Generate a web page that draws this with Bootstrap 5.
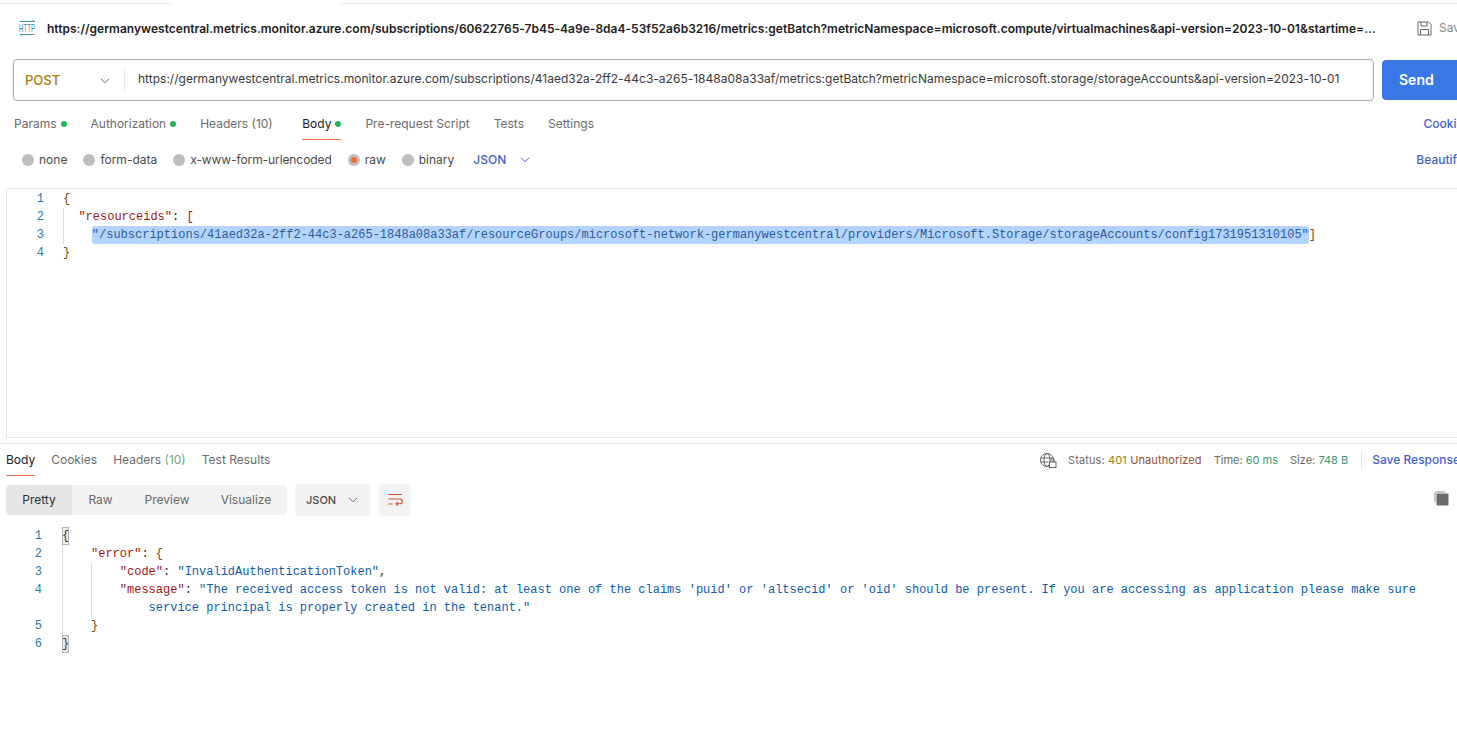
<!DOCTYPE html>
<html lang="en">
<head>
<meta charset="utf-8">
<title>Postman request</title>
<link href="https://cdn.jsdelivr.net/npm/bootstrap@5.3.0/dist/css/bootstrap.min.css" rel="stylesheet">
<style>
html,body{height:100%;background:#fff;overflow:hidden}
body{font-family:Inter,"Liberation Sans",sans-serif;font-size:12px;color:#212121}
.app{width:1500px;height:746px;overflow:hidden}
.tabstrip{height:4px}
.tab-off{height:4px;border-bottom:1px solid #e6e6e6;background:#fff}
.tab-a{width:170px}.tab-b{width:172px;border-bottom:0}
.titlerow{height:42px;padding-left:18px;margin-top:3px}
.titleurl{flex:none;font-size:12px;font-weight:600;color:#212121;width:1330px;margin-left:11px;white-space:nowrap;padding-top:1px;letter-spacing:.015px}
.savebox{margin-left:40px;color:#8a8a8a;gap:7px;font-size:12px;white-space:nowrap}
.urlrow{padding-left:13px;margin-top:10px;gap:8px}
.urlbox{width:1361px;height:42px;border:1px solid #a6a6a6;border-radius:4px;background:#fff}
.method{width:110px;padding:2px 0 0 11px;font-size:13px;font-weight:500;color:#ad7a03}
.method svg{margin-left:40px}
.vsep{width:1px;height:24px;background:#e6e6e6}
.urltext{padding:0 0 3px 13px;font-size:12px;color:#3a3a3a;white-space:nowrap;letter-spacing:.01px}
.sendbtn{width:118px;height:40px;margin-top:1px;background:#3b78e7;border-radius:4px;color:#fff;font-size:14px;font-weight:600;padding:0 0 2px 17px;border:0;text-align:left}
.reqtabs{padding-left:14px;padding-right:30px;margin-top:11px;height:28px;gap:24px}
.rtab{color:#6b6b6b;height:28px;padding-top:4px;white-space:nowrap;line-height:15px}
.rtab.on{color:#212121;border-bottom:1px solid #e8704d}
.rtab.hdr{min-width:78px}
.gdot{display:inline-block;width:6px;height:6px;border-radius:50%;background:#26b35a;margin-left:4px;vertical-align:1px}
.bluelink{color:#3f5fd0;font-weight:500;white-space:nowrap}
.optrow{padding-left:22px;padding-right:36px;margin-top:9px;height:22px;color:#4a4a4a}
.radio{display:inline-block;width:12px;height:12px;border-radius:50%;background:#bdbdbd;margin-right:5px;flex:none}
.radio.sel{position:relative}
.radio.sel::after{content:"";position:absolute;left:3px;top:3px;width:6px;height:6px;border-radius:50%;background:#f26b3a}
.optitem{white-space:nowrap;margin-right:16px}
.optitem.tight{letter-spacing:-.09px}
.jsonsel{margin-left:3px;gap:14px}
.editor{margin:17px 0 0 6px;height:250px;border:1px solid #e6e6e6;border-right:0;border-radius:2px 0 0 0;padding-top:1px}
.code{font-family:"Liberation Mono","DejaVu Sans Mono",monospace;font-size:12px;line-height:18px;color:#212121}
.ln{white-space:pre;height:18px}
.gutter{width:37px;text-align:right;color:#2a7ba6;flex:none}
.src,.src1{margin-left:19px}
.guide{border-left:1px solid #d9d9d9}
.k{color:#a31515}.s{color:#0f5cad}.p{color:#333}
.sel-line{display:inline-block;background:#b3d4fe;border-radius:3px;color:#2f5c99;height:18px;margin-left:-1px}
.br{color:#7a4a10}
.resp{margin-top:5px;border-top:1px solid #e6e6e6;padding-left:6px}
.resptabs{height:32px;gap:16px}
.ptab{color:#6b6b6b;height:32px;padding-top:8px;white-space:nowrap;line-height:15px}
.ptab.on{color:#212121;border-bottom:1px solid #e8704d}
.green{color:#74a87c}
.statusbar{margin-left:auto;font-size:11px;color:#6b6b6b;white-space:nowrap;width:461px;align-items:center;height:20px;margin-top:6px}
.stat{margin-left:11px;letter-spacing:.12px}
.tm{margin-left:12px}.sz{margin-left:12px}
.c401{color:#9a7a12}.cun{color:#8f4f3a}.cok{color:#3f9a76}
.saveresp{font-size:12px;font-weight:500;color:#3f5fd0;padding-left:10px;margin-left:13px;border-left:1px solid #e6e6e6;height:20px;line-height:20px}
.viewrow{margin-top:8px;gap:8px}
.seg{height:30px;background:#f2f2f2;border-radius:4px;width:281px;overflow:hidden}
.seg span{height:30px;line-height:30px;color:#6b6b6b;text-align:center}
.seg .cur{background:#e6e6e6;color:#333;width:66px}
.seg .a2{width:57px}.seg .a3{width:76px}.seg .a4{width:82px}
.jsonbtn{width:76px;height:32px;background:#f2f2f2;border-radius:4px;font-size:11px;font-weight:500;color:#4a4a4a;padding-left:11px;gap:12px}
.wrapbtn{width:32px;height:32px;background:#f2f2f2;border-radius:4px}
.copyicon{margin-left:1015px;margin-top:-4px}
.respcode{margin-top:11px}
.gutter2{width:42px;text-align:right;color:#2a7ba6;flex:none}
.src2{margin-left:20px}
.bx{display:inline-block;width:7px;height:18px;background:#eee;outline:1px solid #b5b5b5;outline-offset:-1px;color:#333;line-height:18px}
.g1{border-left:1px solid #d9d9d9}
.ind{padding-left:28px}
.ind .g1 .ln{margin-left:-1px}
.off1{padding-left:0}
</style>
</head>
<body>
<div class="app">
  <div class="tabstrip d-flex"><div class="tab-off tab-a"></div><div class="tab-b"></div><div class="tab-off flex-grow-1"></div></div>

  <div class="titlerow d-flex align-items-center">
    <svg width="18" height="18" viewBox="0 0 18 18" fill="none" aria-hidden="true"><path d="M1.500 2.500h15M14.500 .5l2 2" stroke="#4d97a8" stroke-width="1"/><text x="1" y="12.500" font-family="'Liberation Sans',sans-serif" font-size="10.500" fill="#3d8a9e" textLength="16" lengthAdjust="spacingAndGlyphs">HTTP</text><path d="M16.500 15.500H2M4 17.500l-2-2" stroke="#4d97a8" stroke-width="1"/></svg>
    <div class="titleurl">https://germanywestcentral.metrics.monitor.azure.com/subscriptions/60622765-7b45-4a9e-8da4-53f52a6b3216/metrics:getBatch?metricNamespace=microsoft.compute/virtualmachines&amp;api-version=2023-10-01&amp;startime=...</div>
    <div class="savebox d-flex align-items-center">
      <svg width="15" height="15" viewBox="0 0 15 15" fill="none" stroke="#666" stroke-width="1" aria-hidden="true"><path d="M1 1h10.500L14 3.500V14H1z"/><path d="M4 1v4h6V1M3.500 14V8.500h8V14"/></svg>
      <span>Save</span>
    </div>
  </div>

  <div class="urlrow d-flex">
    <div class="urlbox d-flex align-items-center">
      <div class="method d-flex align-items-center">POST<svg width="10" height="6" viewBox="0 0 10 6" fill="none" stroke="#666" stroke-width="1" aria-hidden="true"><path d="M1 .8l4 4 4-4"/></svg></div>
      <div class="vsep"></div>
      <div class="urltext">https://germanywestcentral.metrics.monitor.azure.com/subscriptions/41aed32a-2ff2-44c3-a265-1848a08a33af/metrics:getBatch?metricNamespace=microsoft.storage/storageAccounts&amp;api-version=2023-10-01</div>
    </div>
    <button type="button" class="sendbtn">Send</button>
  </div>

  <div class="reqtabs d-flex">
    <div class="rtab">Params<span class="gdot"></span></div>
    <div class="rtab">Authorization<span class="gdot"></span></div>
    <div class="rtab hdr">Headers (10)</div>
    <div class="rtab on">Body<span class="gdot"></span></div>
    <div class="rtab">Pre-request Script</div>
    <div class="rtab">Tests</div>
    <div class="rtab">Settings</div>
    <div class="rtab bluelink ms-auto">Cookies</div>
  </div>

  <div class="optrow d-flex align-items-center">
    <span class="radio"></span><span class="optitem">none</span>
    <span class="radio"></span><span class="optitem">form-data</span>
    <span class="radio"></span><span class="optitem tight">x-www-form-urlencoded</span>
    <span class="radio sel"></span><span class="optitem">raw</span>
    <span class="radio"></span><span class="optitem">binary</span>
    <span class="bluelink jsonsel d-flex align-items-center">JSON<svg width="10" height="6" viewBox="0 0 10 6" fill="none" stroke="#3f5fd0" stroke-width="1" aria-hidden="true"><path d="M1 .8l4 4 4-4"/></svg></span>
    <span class="bluelink ms-auto">Beautify</span>
  </div>

  <div class="editor code">
    <div class="d-flex"><div class="gutter">1</div><div class="src1"><div class="ln br">{</div></div></div>
    <div class="d-flex"><div class="gutter">2<br>3</div><div class="src guide"><div class="ln">  <span class="k">"resourceids"</span><span class="p">: </span><span class="k">[</span></div><div class="ln">    <span class="sel-line">"/subscriptions/41aed32a-2ff2-44c3-a265-1848a08a33af/resourceGroups/microsoft-network-germanywestcentral/providers/Microsoft.Storage/storageAccounts/config1731951310105"</span><span class="br">]</span></div></div></div>
    <div class="d-flex"><div class="gutter">4</div><div class="src1"><div class="ln br">}</div></div></div>
  </div>

  <div class="resp">
    <div class="d-flex">
      <div class="resptabs d-flex">
        <div class="ptab on">Body</div>
        <div class="ptab">Cookies</div>
        <div class="ptab">Headers <span class="green">(10)</span></div>
        <div class="ptab">Test Results</div>
      </div>
      <div class="statusbar d-flex">
        <svg width="18" height="16" viewBox="0 0 18 16" fill="none" stroke="#666" stroke-width="1" aria-hidden="true"><circle cx="8" cy="8" r="6.500"/><ellipse cx="8" cy="8" rx="3" ry="6.500"/><path d="M1.500 6h13M1.500 10h8"/><rect x="10.500" y="10" width="6.500" height="5.500" fill="#fff"/><path d="M12 10V8.500a1.700 1.700 0 0 1 3.400 0V10"/></svg>
        <span class="stat">Status: <span class="c401">401</span> <span class="cun">Unauthorized</span></span>
        <span class="tm">Time: <span class="cok">60 ms</span></span>
        <span class="sz">Size: <span class="cok">748 B</span></span>
        <span class="saveresp">Save Response</span>
      </div>
    </div>

    <div class="viewrow d-flex align-items-center">
      <div class="seg d-flex"><span class="cur">Pretty</span><span class="a2">Raw</span><span class="a3">Preview</span><span class="a4">Visualize</span></div>
      <div class="jsonbtn d-flex align-items-center">JSON<svg width="10" height="6" viewBox="0 0 10 6" fill="none" stroke="#666" stroke-width="1" aria-hidden="true"><path d="M1 .8l4 4 4-4"/></svg></div>
      <div class="wrapbtn d-flex align-items-center justify-content-center">
        <svg width="16" height="14" viewBox="0 0 16 14" fill="none" stroke="#d9512c" stroke-width="1.100" aria-hidden="true"><path d="M1.500 1.500h13.500M1.500 6h11.500a2.300 2.300 0 0 1 0 4.800H9M11 8.800l-2 2 2 2M1.500 11h4"/></svg>
      </div>
      <svg class="copyicon" width="15" height="15" viewBox="0 0 15 15" aria-hidden="true"><path d="M1 11V2.500A1.500 1.500 0 0 1 2.500 1H11" fill="none" stroke="#8a8a8a" stroke-width="1"/><rect x="2.500" y="2.500" width="12" height="12" rx="1" fill="#6b6b6b"/></svg>
    </div>
  </div>

  <div class="respcode code">
    <div class="d-flex"><div class="gutter2">1</div><div class="src2"><div class="ln"><span class="bx">{</span></div></div></div>
    <div class="d-flex"><div class="gutter2">2<br>3<br>4<br>&nbsp;<br>5</div><div class="src2 g1"><div class="ind">
      <div class="ln off1"><span class="k">"error"</span><span class="p">: </span><span class="br">{</span></div>
      <div class="g1">
        <div class="ln">    <span class="k">"code"</span><span class="p">: </span><span class="s">"InvalidAuthenticationToken"</span><span class="p">,</span></div>
        <div class="ln">    <span class="k">"message"</span><span class="p">: </span><span class="s">"The received access token is not valid: at least one of the claims 'puid' or 'altsecid' or 'oid' should be present. If you are accessing as application please make sure</span></div>
        <div class="ln">        <span class="s">service principal is properly created in the tenant."</span></div>
      </div>
      <div class="ln off1"><span class="br">}</span></div>
    </div></div></div>
    <div class="d-flex"><div class="gutter2">6</div><div class="src2"><div class="ln"><span class="bx">}</span></div></div></div>
  </div>
</div>
</body>
</html>
